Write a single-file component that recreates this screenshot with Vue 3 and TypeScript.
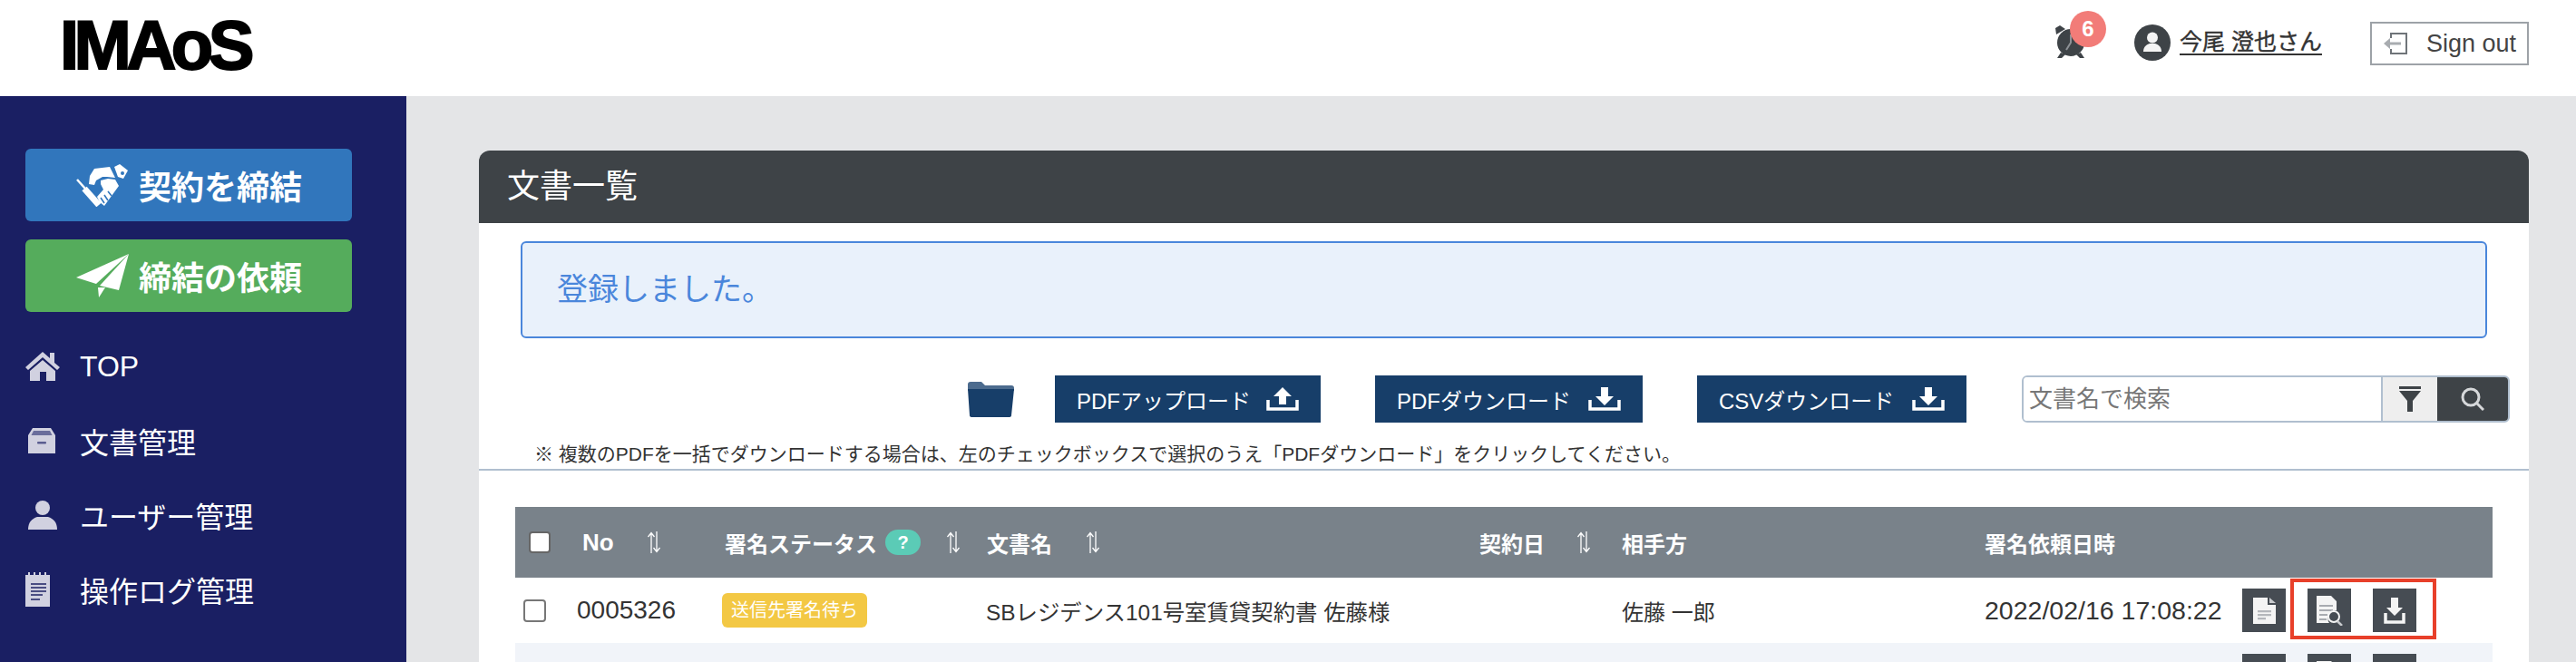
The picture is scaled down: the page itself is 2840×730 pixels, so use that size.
<script setup lang="ts">
interface NavItem { label: string; icon: string }
const nav: NavItem[] = [
  { label: 'TOP', icon: 'home' },
  { label: '文書管理', icon: 'box' },
  { label: 'ユーザー管理', icon: 'user' },
  { label: '操作ログ管理', icon: 'log' },
]
const rows = [
  { check: true, no: '0005326', status: '送信先署名待ち', doc: 'SBレジデンス101号室賃貸契約書 佐藤様', party: '佐藤 一郎', date: '2022/02/16 17:08:22' },
  { check: false, no: '', status: '', doc: '', party: '', date: '' },
]
</script>

<template>
  <div class="page">
    <header class="top">
      <div class="logo">IMAoS</div>
      <div class="top-right">
        <div class="alarm">
          <svg class="clock" viewBox="0 0 34 36">
            <path d="M1 10l-1-7 5-3 6 4z M33 10l1-7-5-3-6 4z" fill="#3e4347" />
            <circle cx="17" cy="19" r="15" fill="#3e4347" />
            <path d="M17 10v9l-5 8" stroke="#8d9196" stroke-width="2" fill="none" />
            <path d="M6 30l-4 6h5l4-4z M28 30l4 6h-5l-4-4z" fill="#3e4347" />
          </svg>
          <span class="alarm-badge">6</span>
        </div>
        <svg class="avatar" viewBox="0 0 40 40">
          <circle cx="20" cy="20" r="20" fill="#3e4347" />
          <circle cx="20" cy="14.5" r="6" fill="#f4f4f4" />
          <path d="M10 30c0-6 4-8 7-9h6c3 1 7 3 7 9z" fill="#f4f4f4" />
        </svg>
        <a class="username">今尾 澄也さん</a>
        <button class="signout">
          <svg class="signout-icon" viewBox="0 0 28 28">
            <path d="M9 8V3h17v22H9v-5" fill="none" stroke="#6f7479" stroke-width="2" />
            <path d="M20 14H6" stroke="#a8acb0" stroke-width="3" />
            <path d="M8 8l-7 6 7 6z" fill="#a8acb0" />
          </svg>
          <span>Sign out</span>
        </button>
      </div>
    </header>

    <div class="body">
      <aside class="side">
        <button class="cta cta-blue">
          <svg class="cta-icon" viewBox="0 0 58 48">
            <path d="M14 23l1-9 5-8 17-2 6 12-9-1-5 0-7 4-2 5z" fill="#fff" />
            <path d="M27 19l8-2 8 1 4 7-16 22-5-4-3-6 7-8-3-6z" fill="#fff" />
            <path d="M27 38l4 6M31 35l4 6M35 31l4 5" stroke="#3176bc" stroke-width="1.6" />
            <path d="M42 4l6-3 9 7-5 9-6-2z" fill="#fff" />
            <circle cx="51" cy="11" r="2" fill="#3176bc" />
            <path d="M1 18l9 10" stroke="#fff" stroke-width="2.5" />
            <path d="M9 28l16 18" stroke="#fff" stroke-width="7" />
          </svg>
          <span>契約を締結</span>
        </button>
        <button class="cta cta-green">
          <svg class="cta-icon" viewBox="0 0 58 48">
            <polygon points="58,0 0,26 22,33" fill="#fff" />
            <polygon points="58,0 26,35 47,40" fill="#fff" />
            <polygon points="24,37 32,37 25,48" fill="#fff" />
          </svg>
          <span>締結の依頼</span>
        </button>
        <nav class="nav">
          <a v-for="item in nav" :key="item.label" class="nav-item">
            <span class="nav-icon">
              <svg v-if="item.icon === 'home'" width="38" height="32" viewBox="0 0 38 32">
                <path d="M19 0l8 7V1h5v11l6 5-3 3L19 6 3 20l-3-3z" fill="#d1d1e0" />
                <path d="M5 21L19 9l14 12v11H23V22h-7v10H5z" fill="#d1d1e0" />
              </svg>
              <svg v-else-if="item.icon === 'box'" class="nav-box" width="30" height="28" viewBox="0 0 30 28">
                <path d="M5 0h20l5 8v20H0V8z" fill="#d1d1e0" />
                <path d="M6 3h18l3 6H3z" fill="#6a6d9c" />
                <rect x="3" y="8" width="24" height="3" fill="#d1d1e0" />
                <rect x="10" y="15" width="10" height="2.5" rx="1" fill="#5a5d90" />
              </svg>
              <svg v-else-if="item.icon === 'user'" class="nav-user" width="32" height="32" viewBox="0 0 32 32">
                <circle cx="16" cy="8" r="8" fill="#d1d1e0" />
                <path d="M0 32c0-8 4-12 10-14h12c6 2 10 6 10 14z" fill="#d1d1e0" />
              </svg>
              <svg v-else width="28" height="38" viewBox="0 0 28 38">
                <path d="M0 3h3V0h2v3h4V0h2v3h4V0h2v3h4V0h2v3h4v35H0z" fill="#d1d1e0" />
                <path d="M6 12h17v2H6zM6 16h17v2H6zM6 20h17v2H6zM6 24h13v2H6zM6 29h10v2H6z" fill="#4a4d83" />
              </svg>
            </span>
            <span>{{ item.label }}</span>
          </a>
        </nav>
      </aside>

      <main class="main">
        <section class="panel">
          <h1 class="panel-title">文書一覧</h1>
          <div class="alert">登録しました。</div>

          <div class="toolbar">
            <svg class="folder" viewBox="0 0 53 40">
              <path d="M1 4q0-3 3-3h12l4 4h29q3 0 3 3v3H1z" fill="#4c6b8e" />
              <path d="M1 9h51l-3 29q0 2-3 2H6q-3 0-3-2z" fill="#173e69" />
            </svg>
            <button class="tool tool-up">
              <span>PDFアップロード</span>
              <svg class="tool-icon" viewBox="0 0 36 26">
                <path d="M18 0l10 10h-6v9h-8v-9H8z" fill="#fff" />
                <path d="M2 14v10h32V14" fill="none" stroke="#fff" stroke-width="3.5" />
              </svg>
            </button>
            <button class="tool tool-down">
              <span>PDFダウンロード</span>
              <svg class="tool-icon" viewBox="0 0 36 26">
                <path d="M18 20L8 10h6V0h8v10h6z" fill="#fff" />
                <path d="M2 14v10h32V14" fill="none" stroke="#fff" stroke-width="3.5" />
              </svg>
            </button>
            <button class="tool tool-csv">
              <span>CSVダウンロード</span>
              <svg class="tool-icon" viewBox="0 0 36 26">
                <path d="M18 20L8 10h6V0h8v10h6z" fill="#fff" />
                <path d="M2 14v10h32V14" fill="none" stroke="#fff" stroke-width="3.5" />
              </svg>
            </button>
            <div class="search">
              <input class="search-input" placeholder="文書名で検索" />
              <button class="search-filter">
                <svg width="24" height="28" viewBox="0 0 24 28">
                  <rect x="0" y="0" width="24" height="3" fill="#3e4347" />
                  <path d="M0 5h24l-9 11v12h-6V16z" fill="#3e4347" />
                </svg>
              </button>
              <button class="search-go">
                <svg width="26" height="26" viewBox="0 0 26 26">
                  <circle cx="11" cy="11" r="9" fill="none" stroke="#d6d8da" stroke-width="3" />
                  <path d="M17 17l8 8" stroke="#d6d8da" stroke-width="3" />
                </svg>
              </button>
            </div>
          </div>
          <p class="note">※ 複数のPDFを一括でダウンロードする場合は、左のチェックボックスで選択のうえ「PDFダウンロード」をクリックしてください。</p>

          <div class="table-wrap">
            <table class="docs">
              <colgroup>
                <col class="c1" /><col class="c2" /><col class="c3" /><col class="c4" />
                <col class="c5" /><col class="c6" /><col class="c7" /><col class="c8" />
              </colgroup>
              <thead>
                <tr>
                  <th><span class="box box-head"></span></th>
                  <th>
                    <div class="th th-no"><span>No</span>
                      <svg class="sort" viewBox="0 0 16 24"><path d="M5 24V2M1.5 6L5 1.5 8.5 6M11 0v22M7.5 18l3.5 4.5 3.5-4.5" fill="none" stroke="#fff" stroke-width="1.3" /></svg>
                    </div>
                  </th>
                  <th>
                    <div class="th th-status"><span>署名ステータス</span><span class="help">?</span>
                      <svg class="sort" viewBox="0 0 16 24"><path d="M5 24V2M1.5 6L5 1.5 8.5 6M11 0v22M7.5 18l3.5 4.5 3.5-4.5" fill="none" stroke="#fff" stroke-width="1.3" /></svg>
                    </div>
                  </th>
                  <th>
                    <div class="th th-doc"><span>文書名</span>
                      <svg class="sort" viewBox="0 0 16 24"><path d="M5 24V2M1.5 6L5 1.5 8.5 6M11 0v22M7.5 18l3.5 4.5 3.5-4.5" fill="none" stroke="#fff" stroke-width="1.3" /></svg>
                    </div>
                  </th>
                  <th>
                    <div class="th th-date"><span>契約日</span>
                      <svg class="sort" viewBox="0 0 16 24"><path d="M5 24V2M1.5 6L5 1.5 8.5 6M11 0v22M7.5 18l3.5 4.5 3.5-4.5" fill="none" stroke="#fff" stroke-width="1.3" /></svg>
                    </div>
                  </th>
                  <th><div class="th">相手方</div></th>
                  <th><div class="th">署名依頼日時</div></th>
                  <th></th>
                </tr>
              </thead>
              <tbody>
                <tr v-for="(row, i) in rows" :key="i" :class="{ alt: i % 2 === 1 }">
                  <td class="cell-check"><span v-if="row.check" class="box"></span></td>
                  <td class="cell-no">{{ row.no }}</td>
                  <td><span v-if="row.status" class="status">{{ row.status }}</span></td>
                  <td class="cell-doc">{{ row.doc }}</td>
                  <td></td>
                  <td class="cell-text">{{ row.party }}</td>
                  <td class="cell-when">{{ row.date }}</td>
                  <td>
                    <div class="actions">
                      <button class="act">
                        <svg width="25" height="29" viewBox="0 0 25 29">
                          <path d="M0 0h16v8h9v21H0z" fill="#f4f4f4" />
                          <path d="M18 0l7 6h-7z" fill="#c9cbce" />
                          <path d="M5 14h15v2.2H5zM5 18h15v2.2H5zM5 22h9v2.2H5z" fill="#b4b7bb" />
                        </svg>
                      </button>
                      <button class="act">
                        <svg width="32" height="33" viewBox="0 0 32 33">
                          <path d="M2 0h16l6 6v10a9 9 0 0 0-8 14H2z" fill="#f4f4f4" />
                          <path d="M5 10h15v2H5zM5 15h15v2H5zM5 20h9v2H5zM5 25h8v2H5z" fill="#a8abb0" />
                          <circle cx="21" cy="23" r="6" fill="none" stroke="#f4f4f4" stroke-width="2" />
                          <path d="M25 28l5 5" stroke="#c9cbce" stroke-width="2.5" />
                        </svg>
                      </button>
                      <button class="act">
                        <svg width="24" height="29" viewBox="0 0 24 29">
                          <path d="M12 20L3 11h5V0h8v11h5z" fill="#f4f4f4" />
                          <path d="M2 17v10h20V17" fill="none" stroke="#f4f4f4" stroke-width="3.5" />
                        </svg>
                      </button>
                    </div>
                  </td>
                </tr>
              </tbody>
            </table>
            <div class="highlight"></div>
          </div>
        </section>
      </main>
    </div>
  </div>
</template>

<style>
html, body { margin: 0; background: #e4e5e7; }
</style>

<style scoped>
* { box-sizing: border-box; }
.page {
  width: 2840px;
  height: 730px;
  overflow: hidden;
  display: flex;
  flex-direction: column;
  background: #e4e5e7;
  color: #333;
  font-family: "Liberation Sans", "Noto Sans CJK JP", sans-serif;
}
button { font-family: inherit; border: 0; padding: 0; }

.top {
  height: 106px;
  flex: none;
  background: #fff;
  display: flex;
  align-items: center;
  justify-content: space-between;
  padding: 0 52px 0 66px;
}
.logo {
  font-size: 76px;
  line-height: 92px;
  font-weight: 700;
  letter-spacing: -5.5px;
  color: #000;
  margin-top: -7px;
  -webkit-text-stroke: 2px #000;
}
.top-right { display: flex; align-items: center; margin-top: -12px; }
.alarm { position: relative; width: 34px; height: 36px; margin-top: -2px; }
.clock { width: 34px; height: 36px; display: block; }
.alarm-badge {
  position: absolute;
  left: 16px;
  top: -16px;
  width: 40px;
  height: 40px;
  border-radius: 50%;
  background: #f27c78;
  color: #fff;
  font-size: 24px;
  font-weight: 700;
  line-height: 40px;
  text-align: center;
}
.avatar { width: 40px; height: 40px; margin-left: 53px; }
.username {
  margin-left: 10px;
  font-size: 25px;
  color: #333;
  -webkit-text-stroke: 0.4px #333;
  text-decoration: underline;
  text-decoration-thickness: 2px;
  text-underline-offset: 4px;
  line-height: 40px;
  width: 160px;
  white-space: nowrap;
  margin-top: -2px;
}
.signout {
  margin-left: 50px;
  margin-top: 2px;
  width: 175px;
  height: 48px;
  background: #fff;
  border: 2px solid #9da2a7;
  display: flex;
  align-items: center;
  padding-left: 12px;
  font-size: 27px;
  color: #444;
}
.signout-icon { width: 28px; height: 28px; margin-right: 20px; }

.body { flex: 1; display: flex; min-height: 0; }
.side {
  width: 448px;
  flex: none;
  background: #1a1f63;
  padding: 58px 60px 0 28px;
  display: flex;
  flex-direction: column;
  gap: 20px;
}
.cta {
  height: 80px;
  flex: none;
  border-radius: 6px;
  color: #fff;
  font-size: 36px;
  font-weight: 700;
  display: flex;
  align-items: center;
  padding-left: 56px;
  gap: 11px;
}
.cta-blue { background: #3176bc; }
.cta-green { background: #55ac5c; }
.cta-icon { width: 58px; height: 48px; flex: none; }
.nav { display: flex; flex-direction: column; margin-top: -1px; }
.nav-item {
  height: 82px;
  display: flex;
  align-items: center;
  color: #fff;
  font-size: 32px;
}
.nav-icon { width: 60px; flex: none; display: flex; align-items: center; }
.nav-box, .nav-user { margin-left: 3px; }

.main { flex: 1; min-width: 0; padding: 60px 52px 0 80px; }
.panel { background: #fff; border-radius: 12px 12px 0 0; height: 100%; }
.panel-title {
  margin: 0;
  height: 80px;
  background: #3e4347;
  border-radius: 12px 12px 0 0;
  color: #fff;
  font-size: 36px;
  font-weight: 400;
  line-height: 80px;
  padding-left: 31px;
}
.alert {
  margin: 20px 46px 0;
  height: 107px;
  background: #e9f1fb;
  border: 2px solid #4a86db;
  border-radius: 6px;
  color: #4a86db;
  font-size: 34px;
  line-height: 103px;
  padding-left: 38px;
}
.toolbar {
  display: flex;
  align-items: center;
  margin-top: 41px;
  padding-right: 21px;
  height: 52px;
  justify-content: flex-end;
}
.folder { width: 53px; height: 40px; margin-right: 44px; flex: none; }
.tool {
  height: 52px;
  background: #173e69;
  color: #fff;
  font-size: 24px;
  display: flex;
  align-items: center;
  justify-content: space-between;
  padding: 0 24px 0 24px;
  flex: none;
}
.tool-up { width: 293px; margin-right: 60px; }
.tool-down { width: 295px; margin-right: 60px; }
.tool-csv { width: 297px; margin-right: 61px; }
.tool-icon { width: 36px; height: 26px; flex: none; }
.search {
  width: 538px;
  height: 52px;
  display: flex;
  border: 2px solid #b0bfcf;
  border-radius: 6px;
  overflow: hidden;
  flex: none;
}
.search-input {
  flex: 1;
  min-width: 0;
  border: 0;
  outline: 0;
  padding: 0 0 0 6px;
  font-size: 26px;
  font-family: inherit;
  background: #fff;
}
.search-input::placeholder { color: #777; opacity: 1; }
.search-filter {
  width: 62px;
  background: #eee;
  border-left: 2px solid #b0bfcf;
  display: flex;
  align-items: center;
  justify-content: center;
}
.search-go {
  width: 78px;
  background: #3e4347;
  display: flex;
  align-items: center;
  justify-content: center;
}
.note {
  margin: 22px 0 0;
  padding: 0 0 4px 61px;
  height: 31px;
  line-height: 26px;
  font-size: 21px;
  color: #333;
  border-bottom: 2px solid #b0bfcf;
}
.table-wrap { position: relative; margin: 40px 40px 0; }
.docs { width: 2180px; table-layout: fixed; border-collapse: collapse; }
.c1 { width: 68px; } .c2 { width: 160px; } .c3 { width: 291px; } .c4 { width: 544px; }
.c5 { width: 157px; } .c6 { width: 400px; } .c7 { width: 284px; } .c8 { width: 276px; }
thead tr { height: 78px; background: #79828a; }
th { padding: 0; text-align: left; color: #fff; font-size: 24px; font-weight: 700; }
tbody tr { height: 72px; background: #fff; }
tbody tr.alt { background: #f1f4f9; }
td { padding: 0; font-size: 24px; color: #333; white-space: nowrap; }
.th { display: flex; align-items: center; height: 28px; white-space: nowrap; }
.th-no { padding-left: 6px; font-size: 26px; }
.th-no span { width: 71px; }
.th-status { padding-left: 3px; }
.th-doc { padding-left: 1px; }
.th-doc span { width: 109px; }
.th-date span { width: 107px; }
.sort { width: 16px; height: 24px; flex: none; }
.help {
  width: 39px;
  height: 28px;
  border-radius: 14px;
  background: #5bcbb6;
  text-align: center;
  line-height: 28px;
  font-size: 20px;
  margin: 0 28px 0 9px;
}
.box {
  display: block;
  width: 25px;
  height: 25px;
  background: #fff;
  border: 2px solid #777;
  border-radius: 4px;
  margin-left: 9px;
}
.box-head { width: 24px; height: 24px; margin-left: 15px; border-color: #666; }
.cell-no { font-size: 28px; }
.cell-when { font-size: 28.5px; }
.cell-text { font-size: 24px; }
.cell-doc { font-size: 24.4px; }
.status {
  display: inline-block;
  width: 160px;
  height: 38px;
  background: #f3c844;
  border-radius: 6px;
  color: #fff;
  font-size: 20px;
  line-height: 38px;
  text-align: center;
  vertical-align: middle;
}
.actions { display: flex; gap: 24px; }
.act {
  width: 48px;
  height: 48px;
  background: #464c53;
  display: flex;
  align-items: center;
  justify-content: center;
  flex: none;
}
.highlight {
  position: absolute;
  left: 1957px;
  top: 79px;
  width: 161px;
  height: 67px;
  border: 4px solid #e8402a;
  pointer-events: none;
}
</style>
